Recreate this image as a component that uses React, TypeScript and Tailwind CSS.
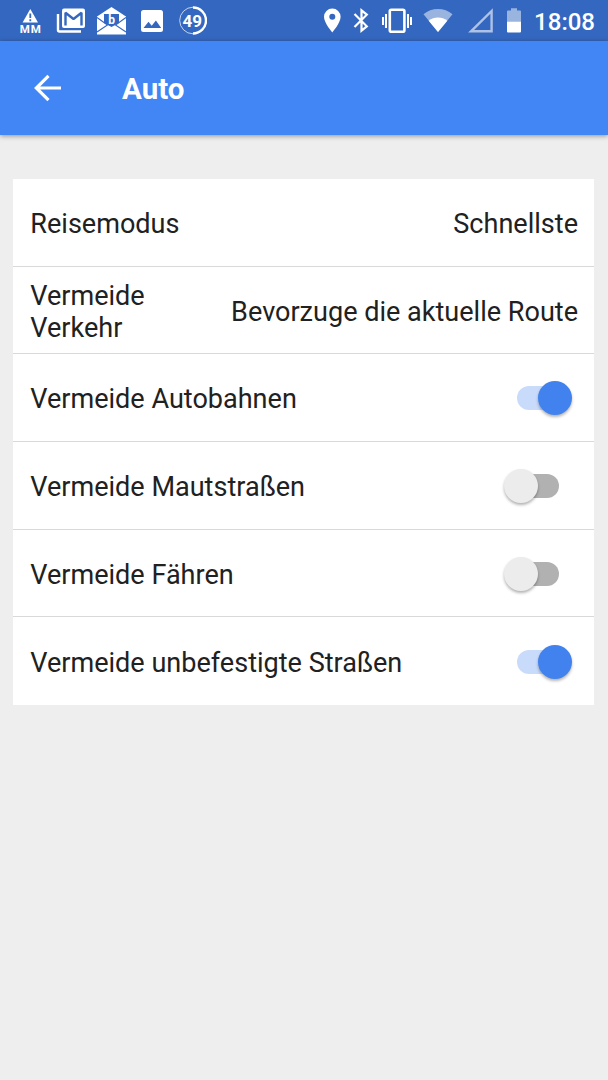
import type { ReactNode } from 'react'

type RowProps = {
  label: string
  narrow?: boolean
  last?: boolean
  children: ReactNode
}

function App() {
  return (
    <div className="flex h-[1080px] w-[608px] flex-col bg-[#eeeeee] font-['Roboto','Liberation_Sans',sans-serif] text-[#212121]">
      <StatusBar />
      <header className="z-10 flex h-[94px] shrink-0 items-center bg-[#4285f4] pl-[34px] text-white shadow-[0_1px_5px_rgba(0,0,0,0.4)]">
        <button type="button" aria-label="Zurück">
          <svg className="block h-7 w-7" viewBox="0 0 28 28" fill="none" stroke="currentColor" strokeWidth="3.2">
            <path d="M27 14H2.5M14.5 1.8L2.3 14l12.2 12.2" />
          </svg>
        </button>
        <h1 className="mt-[2px] ml-[60px] text-[29.5px] leading-9 font-bold">Auto</h1>
      </header>

      <main className="mt-11 mr-[14px] ml-[13px] bg-white">
        <Row label="Reisemodus">Schnellste</Row>
        <Row label="Vermeide Verkehr" narrow>
          Bevorzuge die aktuelle Route
        </Row>
        <Row label="Vermeide Autobahnen">
          <Toggle on />
        </Row>
        <Row label="Vermeide Mautstraßen">
          <Toggle />
        </Row>
        <Row label="Vermeide Fähren">
          <Toggle />
        </Row>
        <Row label="Vermeide unbefestigte Straßen" last>
          <Toggle on />
        </Row>
      </main>
    </div>
  )
}

function Row({ label, narrow, last, children }: RowProps) {
  return (
    <div
      className={`flex h-[87.7px] items-center justify-between pt-[3.3px] pr-[16px] pl-[17.3px] text-[27.05px] leading-8 ${
        last ? '' : 'border-b border-[#d9d9d9]'
      }`}
    >
      <span className={narrow ? 'w-[130px]' : ''}>{label}</span>
      <span className="whitespace-nowrap">{children}</span>
    </div>
  )
}

function Toggle({ on = false }: { on?: boolean }) {
  return (
    <button
      type="button"
      role="switch"
      aria-checked={on}
      className={`mr-[19px] mb-[2px] flex h-6 w-[42px] items-center rounded-full ${
        on ? 'justify-end bg-[#c9dbfb]' : 'justify-start bg-[#b1b1b1]'
      }`}
    >
      <span
        className={`h-[34px] w-[34px] shrink-0 rounded-full shadow-[0_2px_3px_rgba(0,0,0,0.3)] ${
          on ? '-mr-[13px] bg-[#4182ee]' : '-ml-[13px] bg-[#ececec]'
        }`}
      />
    </button>
  )
}

function StatusBar() {
  return (
    <div className="flex h-[41px] shrink-0 items-center bg-[#3468c0] pr-[13px] pl-[18px] text-white">
      {/* notifications */}
      <svg className="h-10 w-6" viewBox="0 0 24 40" fill="currentColor">
        <path d="M12.3 8L20 21.5H4.6z" />
        <path d="M12.3 12.5v4.5M12.3 18.2v2" stroke="#3468c0" strokeWidth="1.8" />
        <text x="12.8" y="32.4" fontSize="11.5" fontWeight="700" textAnchor="middle" letterSpacing="1">
          MM
        </text>
      </svg>
      <svg className="ml-[14px] h-10 w-[30px]" viewBox="0 0 30 40" fill="none" stroke="currentColor">
        <path d="M2 13v16a1.5 1.5 0 0 0 1.5 1.5h21.5" strokeWidth="2.4" />
        <path d="M8 7.5h19a2 2 0 0 1 2 2v15.5a2 2 0 0 1-2 2H8a2 2 0 0 1-2-2V9.5a2 2 0 0 1 2-2z" fill="currentColor" stroke="none" />
        <path d="M9.5 24.5V11.8l8 6.2 8-6.2v12.7" stroke="#3468c0" strokeWidth="2.4" strokeLinejoin="bevel" />
      </svg>
      <svg className="ml-[11px] h-10 w-[30px]" viewBox="0 0 30 40" fill="currentColor">
        <path d="M0 15.5L14.5 6 29 15.5v18H0z" />
        <path d="M7 13h15v9l-7.5 4L7 22z" fill="#3468c0" />
        <path d="M0 16.5L10.5 24 0 31M29 16.5L18.5 24 29 31" fill="none" stroke="#3468c0" strokeWidth="1.1" />
        <text x="14.5" y="23" fontSize="12" fontWeight="700" textAnchor="middle">
          b
        </text>
      </svg>
      <svg className="ml-[14px] h-10 w-[22px]" viewBox="0 0 22 40" fill="currentColor">
        <rect y="9" width="22" height="22" rx="2.5" />
        <path d="M2.5 27l5-6.2 3.2 4 4.2-5.3 5.3 7.5z" fill="#3468c0" />
      </svg>
      <svg className="ml-4 h-10 w-7" viewBox="0 0 28 40" fill="none" stroke="currentColor">
        <circle cx="14" cy="19.5" r="13.3" strokeWidth="1" opacity="0.7" />
        <path d="M14 6.5a13 13 0 0 1 0 26" strokeWidth="2.4" />
        <text x="13.3" y="25.5" fontSize="17" fontWeight="700" textAnchor="middle" fill="currentColor" stroke="none">
          49
        </text>
      </svg>

      {/* system icons */}
      <svg className="ml-[117px] h-10 w-[17px]" viewBox="0 0 17 40" fill="currentColor">
        <path fillRule="evenodd" d="M8.3 7.5A8.3 8.3 0 0 0 0 15.8C0 22 8.3 31.5 8.3 31.5s8.3-9.5 8.3-15.7A8.3 8.3 0 0 0 8.3 7.5zm0 5.3a3 3 0 1 1 0 6 3 3 0 0 1 0-6z" />
      </svg>
      <svg className="ml-[12px] h-10 w-4" viewBox="0 0 16 40" fill="none" stroke="currentColor" strokeWidth="2.2">
        <path d="M1.5 13l12.3 12.3-5.3 4.4V9.3l5.3 4.4L1.5 26" />
      </svg>
      <svg className="ml-[13px] h-10 w-[30px]" viewBox="0 0 30 40" fill="none" stroke="currentColor" strokeWidth="2">
        <rect x="7.8" y="8.7" width="14.6" height="22" rx="1.5" strokeWidth="2.6" />
        <path d="M4 13v14M1 16v8M26 13v14M29 16v8" />
      </svg>
      <svg className="ml-[11px] h-10 w-[30px]" viewBox="0 0 30 40" fill="currentColor">
        <path d="M.5 13.2a22.5 22.5 0 0 1 29 0L15 31z" opacity="0.5" />
        <path d="M5.7 19.8a15 15 0 0 1 18.6 0L15 31z" />
      </svg>
      <svg className="ml-[15px] h-10 w-[25px]" viewBox="0 0 25 40" fill="none" stroke="currentColor">
        <path d="M3 30.3L23.6 10v20.3z" strokeWidth="2.4" opacity="0.6" />
      </svg>
      <svg className="ml-[14px] h-10 w-[14px]" viewBox="0 0 14 40" fill="currentColor">
        <path d="M0 20.5v-10a1 1 0 0 1 1-1h3V7.2h6v2.3h3a1 1 0 0 1 1 1v10z" opacity="0.5" />
        <path d="M0 20.5h14v10a1 1 0 0 1-1 1H1a1 1 0 0 1-1-1z" />
      </svg>
      <span className="mt-[2px] ml-auto text-[24px] font-medium">18:08</span>
    </div>
  )
}

export default App
